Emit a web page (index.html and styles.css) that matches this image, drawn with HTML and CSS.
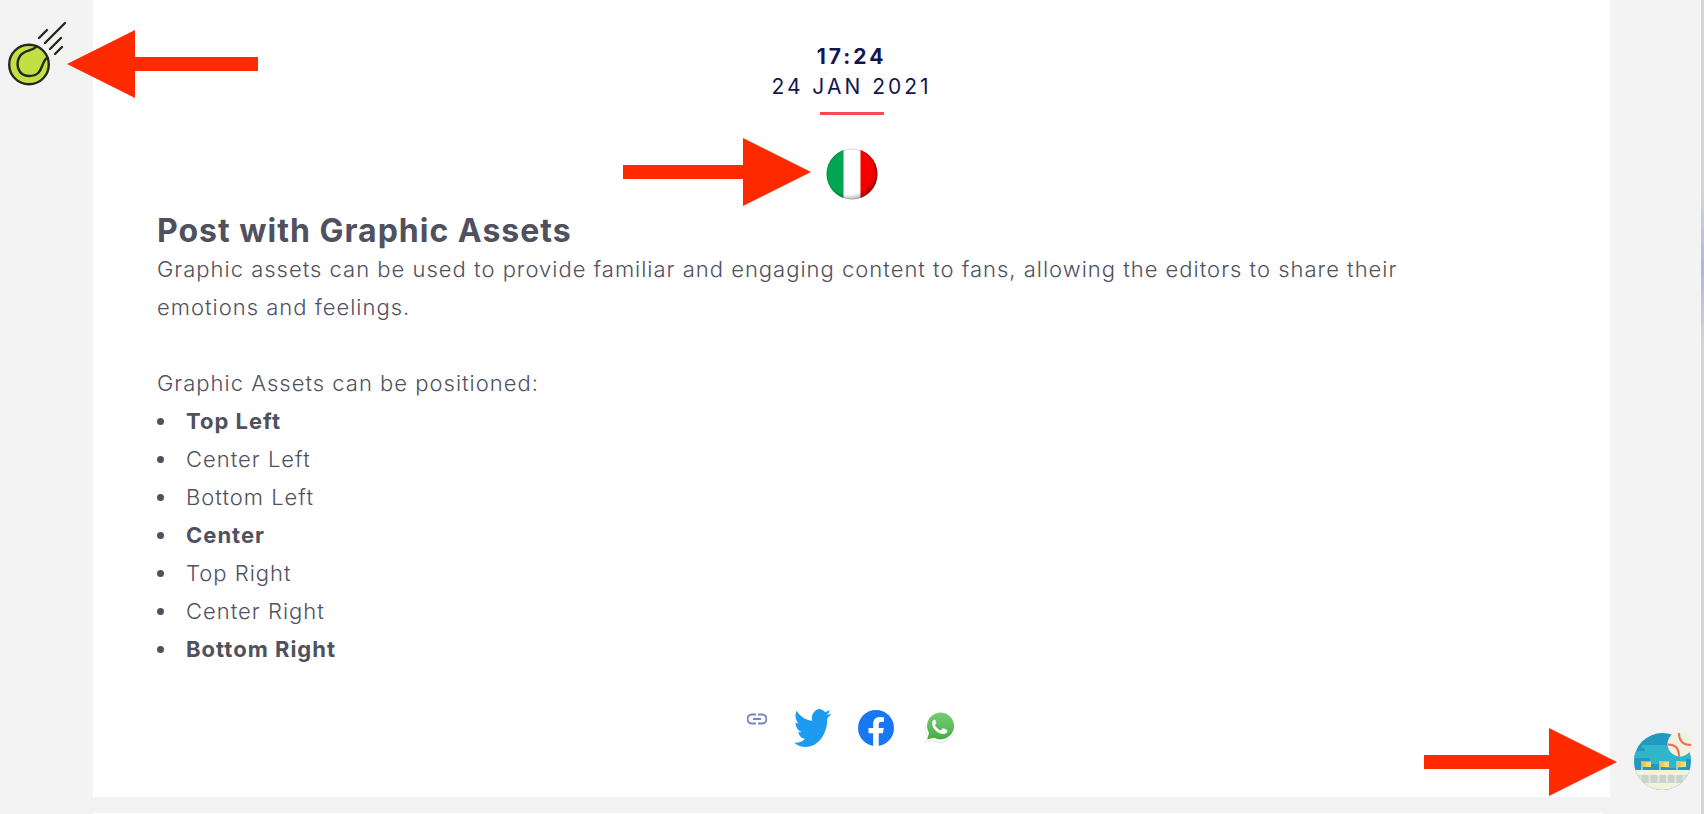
FILE: index.html
```html
<!DOCTYPE html>
<html lang="en">
<head>
    <meta charset="UTF-8">
    <meta name="viewport" content="width=device-width, initial-scale=1.0">
    <title>Post with Graphic Assets</title>
    <link rel="stylesheet" href="styles.css">
</head>
<body>
    <main class="feed">
        <article class="post">
            <header class="post-header">
                <time class="post-time" datetime="2021-01-24T17:24">
                    <strong>17:24</strong>
                    <span>24 JAN 2021</span>
                </time>
                <div class="divider"></div>
                <svg class="flag" viewBox="0 0 52 52" aria-label="Italy">
                    <defs>
                        <clipPath id="flag-clip"><circle cx="26" cy="26" r="25.5"/></clipPath>
                        <radialGradient id="flag-shade" cx="0.44" cy="0.44" r="0.6">
                            <stop offset="0.75" stop-color="#000" stop-opacity="0"/>
                            <stop offset="1" stop-color="#000" stop-opacity="0.4"/>
                        </radialGradient>
                    </defs>
                    <g clip-path="url(#flag-clip)">
                        <rect width="52" height="52" fill="#fff"/>
                        <rect width="17.5" height="52" fill="#00a650"/>
                        <rect x="34.5" width="17.5" height="52" fill="#f60000"/>
                        <rect width="52" height="52" fill="url(#flag-shade)"/>
                    </g>
                    <circle cx="26" cy="26" r="25" fill="none" stroke="#000" stroke-opacity="0.15"/>
                </svg>
            </header>

            <section class="post-body">
                <h1>Post with Graphic Assets</h1>
                <p>Graphic assets can be used to provide familiar and engaging content to fans, allowing the editors to share their emotions and feelings.</p>
                <p class="intro">Graphic Assets can be positioned:</p>
                <ul class="positions">
                    <li><strong>Top Left</strong></li>
                    <li>Center Left</li>
                    <li>Bottom Left</li>
                    <li><strong>Center</strong></li>
                    <li>Top Right</li>
                    <li>Center Right</li>
                    <li><strong>Bottom Right</strong></li>
                </ul>
            </section>

            <footer class="share">
                <a class="share-link" href="#" aria-label="Copy link">
                    <svg width="20" height="20" viewBox="0 0 20 20" fill="none" stroke="#7f83c4" stroke-width="2">
                        <path d="M9 5.500H5a4.500 4.500 0 0 0 0 9h4M11 5.500h4a4.500 4.500 0 0 1 0 9h-4M6 10h8"/>
                    </svg>
                </a>
                <a href="#" aria-label="Twitter">
                    <svg width="37" height="38" viewBox="0 2.2 24 19.6" preserveAspectRatio="none" fill="#1d9bf0">
                        <path d="M23.953 4.57a10 10 0 0 1-2.825.775 4.958 4.958 0 0 0 2.163-2.723 9.9 9.9 0 0 1-3.127 1.184 4.92 4.92 0 0 0-8.384 4.482C7.69 8.095 4.067 6.13 1.64 3.162a4.822 4.822 0 0 0-.666 2.475c0 1.71.87 3.213 2.188 4.096a4.904 4.904 0 0 1-2.228-.616v.06a4.923 4.923 0 0 0 3.946 4.827 4.996 4.996 0 0 1-2.212.085 4.936 4.936 0 0 0 4.604 3.417 9.867 9.867 0 0 1-6.102 2.105c-.39 0-.779-.023-1.17-.067a13.995 13.995 0 0 0 7.557 2.209c9.053 0 13.998-7.496 13.998-13.985 0-.21 0-.42-.015-.63a9.935 9.935 0 0 0 2.46-2.548z"/>
                    </svg>
                </a>
                <a href="#" aria-label="Facebook">
                    <svg width="36" height="36" viewBox="0 0 24 24">
                        <circle cx="12" cy="12" r="12" fill="#1877f2"/>
                        <path fill="#fff" d="M10.1 24v-8.500H7v-3.500h3.100V9.400c0-3 1.800-4.700 4.500-4.700 1.300 0 2.700.2 2.700.2v3h-1.500c-1.500 0-2 .9-2 1.900V12h3.400l-.6 3.500h-2.800V24z"/>
                    </svg>
                </a>
                <a href="#" aria-label="WhatsApp">
                    <svg width="36" height="36" viewBox="0 0 36 36">
                        <defs>
                            <linearGradient id="wa" x1="0" y1="0" x2="0" y2="1">
                                <stop offset="0" stop-color="#78cd72"/>
                                <stop offset="1" stop-color="#4aac49"/>
                            </linearGradient>
                        </defs>
                        <path fill="#e9e9e9" d="M3 33l2.500-8A15 15 0 1 1 11 31z"/>
                        <path fill="#fff" d="M4 31.500l2.400-7.500A14.500 14.500 0 1 1 11.500 29.500z"/>
                        <path fill="url(#wa)" d="M6 29.500l2-6.500A13.500 13.500 0 1 1 13 27.800z"/>
                        <path fill="#fff" d="M13.500 9.500c-1.800.6-2.800 2.600-2.300 5 1.100 5 5.300 8.700 10.300 9.500 2.600.3 4.900-1 5-3.400 0-.7-4.200-2.700-4.800-2.300l-1.900 2.100c-2.800-1-4.700-2.900-5.900-5.400l1.500-1.900c.2-.6-1.100-3.800-1.900-3.600z"/>
                    </svg>
                </a>
            </footer>
        </article>

        <article class="post next-post"></article>
    </main>

    <!-- Graphic assets pinned to the corners -->
    <svg class="asset asset-top-left" viewBox="0 0 60 66" fill="none" stroke="#252820" stroke-width="2.400" stroke-linecap="round">
        <circle cx="21" cy="44.500" r="19.800" fill="#c2e044"/>
        <path d="M28 27C24 31 16 30 12 36c-5 8-2 20 9 20 15 0 11-13 18-18"/>
        <path d="M31 18l8-8M37 23L57 3M42 29l11-11M47 34l7-7"/>
    </svg>
    <svg class="asset asset-bottom-right" viewBox="0 0 57 57">
        <defs>
            <clipPath id="stadium-clip"><circle cx="28.500" cy="28.500" r="28.500"/></clipPath>
        </defs>
        <g clip-path="url(#stadium-clip)">
            <rect width="57" height="57" fill="#2299c1"/>
            <path fill="#31b5cb" d="M8 12h49v14h-5v5h-4v4H31v-4H16v-6H0v-7h11v-3H8z"/>
            <path fill="#eff2dc" d="M0 37h57v20H0z"/>
            <path fill="#cbd3ce" d="M0 42h57v8H0z"/>
            <path stroke="#e1e6d8" stroke-width="2" d="M6.500 42v8M15.500 42v8M24.500 42v8M33 42v8M41.500 42v8M50 42v8"/>
            <path stroke="#eff2dc" d="M8 28v9M26 28v9M43 28v9"/>
            <path fill="#f6dc72" d="M8.500 28.500H17V34H8.500zM26.500 28.500H35V34h-8.500zM43.500 28.500H52V34h-8.500z"/>
            <path fill="#f2c04d" d="M8.500 28.500h3V34h-3zM26.500 28.500h3V34h-3zM43.500 28.500h3V34h-3z"/>
        </g>
        <circle cx="46" cy="11" r="12.500" fill="#eff2dc"/>
        <path fill="none" stroke="#f5685b" stroke-width="2" d="M34 11.500c7 0 11 4 11 12M45 0c0 8 4 12 12 12"/>
    </svg>

    <!-- Arrows pointing at each asset -->
    <svg class="arrow arrow-top-left" viewBox="0 0 191 68" fill="#ff2a00"><path d="M0 34L68 0v27h123v14H68v27z"/></svg>
    <svg class="arrow arrow-center" viewBox="0 0 188 68" fill="#ff2a00"><path d="M188 34L120 0v27H0v14h120v27z"/></svg>
    <svg class="arrow arrow-bottom-right" viewBox="0 0 193 68" fill="#ff2a00"><path d="M193 34L125 0v27H0v14h125v27z"/></svg>
</body>
</html>
```

FILE: styles.css
```css
* {
    box-sizing: border-box;
}

body {
    font-family: Inter, "Open Sans", sans-serif;
    font-size: 22px;
    font-weight: 300;
    line-height: 38px;
    letter-spacing: 1px;
    color: #50515f;
    background: #f3f3f3;
    margin: 0;
    border-right: 3px solid #d5d5d5;
    border-image: linear-gradient(#d5d5d5 24%, #b4b4dc 33%, #d5d5d5 42%) 1;
}

.feed {
    display: flex;
    flex-direction: column;
    gap: 16px;
    min-height: 100vh;
    margin: 0 91px 0 93px;
}

.post {
    background: white;
    padding: 42px 64px 50px;
}

.next-post {
    flex: 1;
    margin-right: 7px;
    padding: 0;
}

.post-header {
    display: flex;
    flex-direction: column;
    align-items: center;
}

.post-time {
    display: flex;
    flex-direction: column;
    align-items: center;
    font-size: 21px;
    font-weight: 400;
    line-height: 30px;
    letter-spacing: 3px;
    color: #14174f;
}

.post-time strong {
    font-weight: 700;
}

.divider {
    width: 64px;
    height: 3px;
    margin: 10px 0 33px;
    background: #fb4a55;
}

.flag {
    width: 52px;
    height: 52px;
}

.post-body {
    padding-right: 96px;
}

h1 {
    font-size: 32px;
    font-weight: 700;
    line-height: 38px;
    margin: 12px 0 0;
}

p {
    margin: 0;
}

.intro {
    margin-top: 38px;
}

.positions {
    list-style: none;
    margin: 0;
    padding: 0;
}

.positions li {
    display: flex;
    align-items: center;
    gap: 22px;
}

.positions li::before {
    content: "";
    width: 7px;
    height: 7px;
    border-radius: 50%;
    background: #50515f;
}

.positions strong {
    font-weight: 700;
}

.share {
    display: flex;
    justify-content: center;
    align-items: center;
    gap: 27px;
    margin-top: 41px;
}

.share a {
    display: flex;
}

.share .share-link {
    align-self: flex-start;
}

.asset,
.arrow {
    position: absolute;
}

.asset-top-left {
    top: 20px;
    left: 8px;
    width: 60px;
    height: 66px;
}

.asset-bottom-right {
    right: 13px;
    bottom: 24px;
    width: 57px;
    height: 57px;
}

.arrow {
    height: 68px;
}

.arrow-top-left {
    top: 30px;
    left: 67px;
}

.arrow-center {
    top: 138px;
    right: calc(50% + 41px);
}

.arrow-bottom-right {
    right: 87px;
    bottom: 18px;
}
```
